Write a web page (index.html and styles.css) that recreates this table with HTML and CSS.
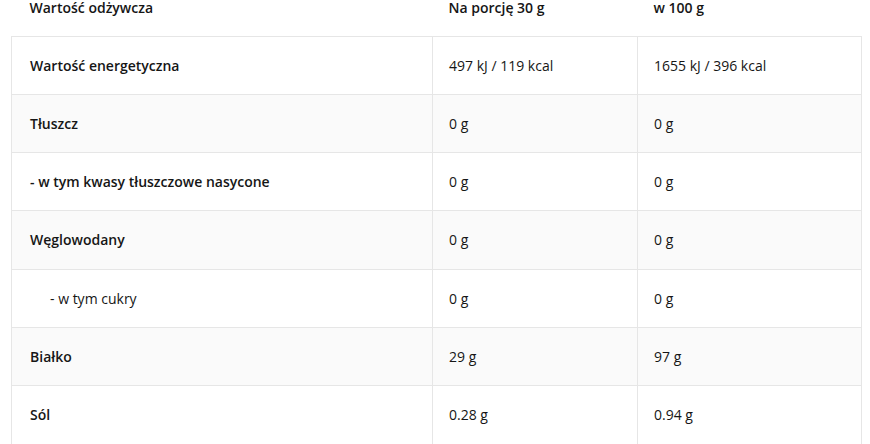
FILE: index.html
```html
<!DOCTYPE html>
<html lang="pl">
<head>
<meta charset="utf-8">
<title>Wartość odżywcza</title>
<link rel="stylesheet" href="styles.css">
</head>
<body>
<div class="wrap">
<table class="nutri">
  <colgroup>
    <col class="c1"><col class="c2"><col class="c3">
  </colgroup>
  <thead>
    <tr>
      <th>Wartość odżywcza</th>
      <th class="val">Na porcję 30 g</th>
      <th class="val">w 100 g</th>
    </tr>
  </thead>
  <tbody>
    <tr><td class="lbl">Wartość energetyczna</td><td>497 kJ / 119 kcal</td><td>1655 kJ / 396 kcal</td></tr>
    <tr class="alt"><td class="lbl">Tłuszcz</td><td>0 g</td><td>0 g</td></tr>
    <tr><td class="lbl">- w tym kwasy tłuszczowe nasycone</td><td>0 g</td><td>0 g</td></tr>
    <tr class="alt"><td class="lbl">Węglowodany</td><td>0 g</td><td>0 g</td></tr>
    <tr><td class="sub">- w tym cukry</td><td>0 g</td><td>0 g</td></tr>
    <tr class="alt"><td class="lbl">Białko</td><td>29 g</td><td>97 g</td></tr>
    <tr><td class="lbl">Sól</td><td>0.28 g</td><td>0.94 g</td></tr>
  </tbody>
</table>
</div>
</body>
</html>
```

FILE: styles.css
```css
html, body {
  margin: 0;
  padding: 0;
  background: #ffffff;
}
body {
  font-family: "Open Sans", "DejaVu Sans", sans-serif;
  color: #161616;
  font-size: 14px;
  overflow: hidden;
}
.wrap {
  padding-left: 11px;
}
.nutri {
  width: 850px;
  border-collapse: collapse;
  table-layout: fixed;
}
.c1 { width: 421px; }
.c2 { width: 205px; }
.c3 { width: 224px; }
.nutri th {
  text-align: left;
  font-weight: 600;
  padding: 1px 16px 20.5px;
  line-height: 14px;
  border: none;
}
.nutri th:first-child {
  padding-left: 18px;
}
.nutri td {
  padding: 20px 16px;
  line-height: 17.33px;
  border: 1px solid #e6e6e6;
  font-weight: 400;
}
.nutri tr.alt td {
  background: #fafafa;
}
.nutri td.lbl {
  padding-left: 18px;
  font-weight: 600;
}
.nutri td.sub {
  padding-left: 38px;
  font-weight: 400;
}
```
